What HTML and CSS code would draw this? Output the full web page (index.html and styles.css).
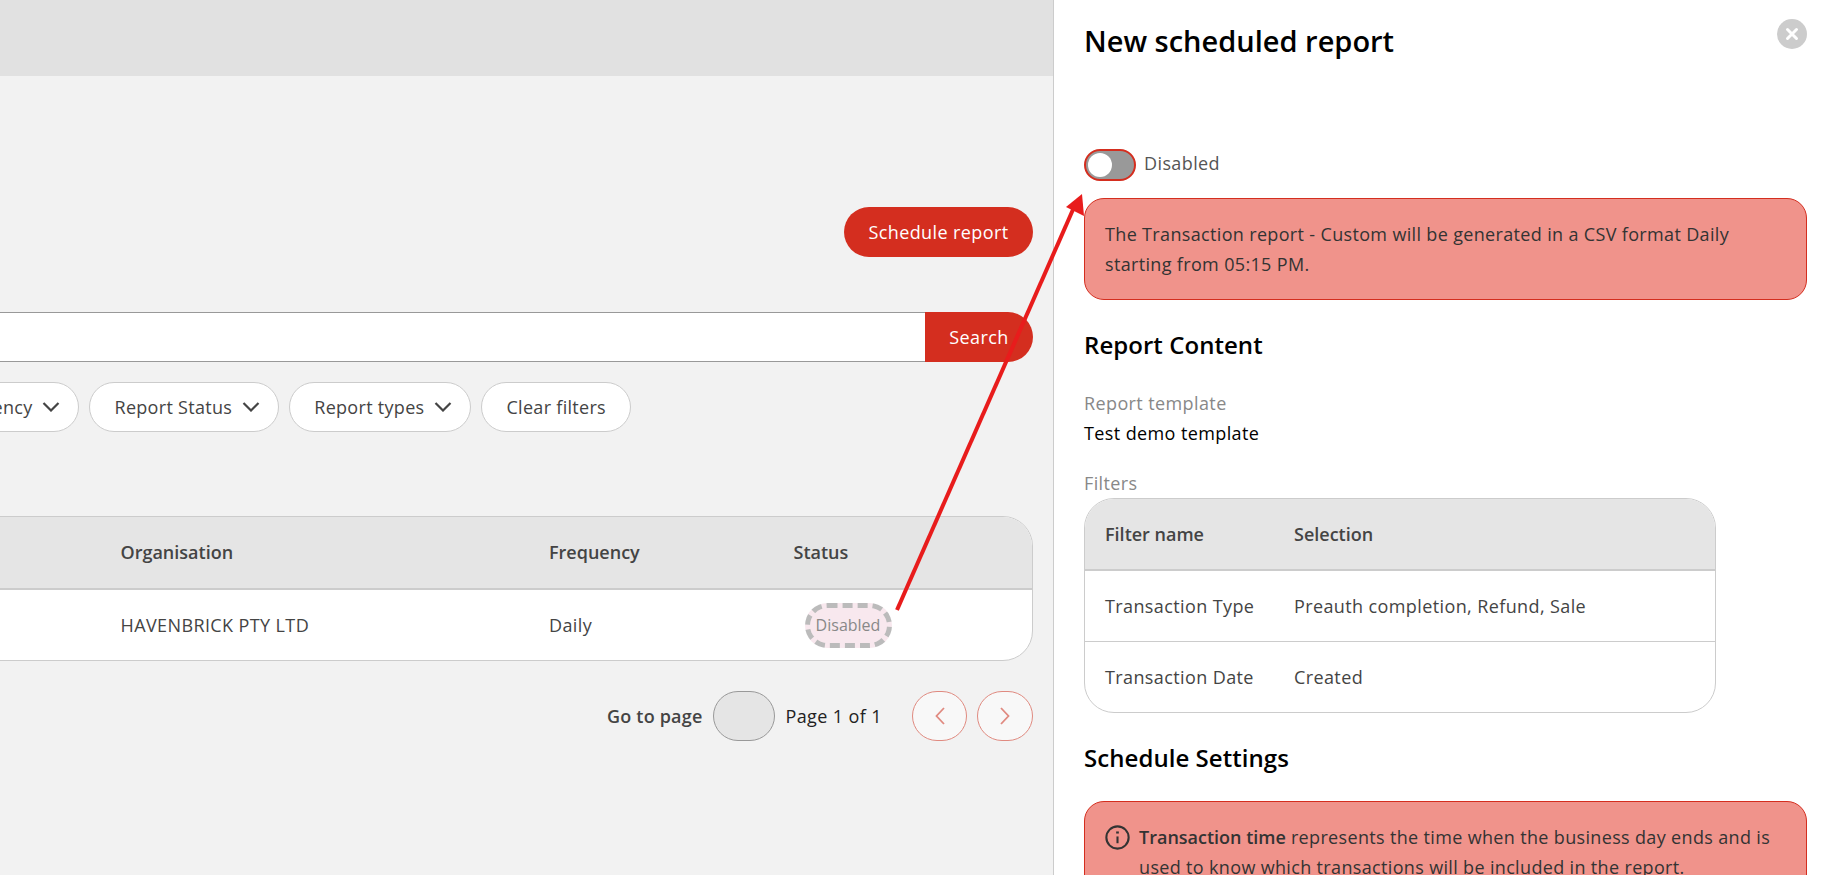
FILE: index.html
```html
<!DOCTYPE html>
<html lang="en">
<head>
<meta charset="utf-8">
<title>New scheduled report</title>
<link rel="stylesheet" href="styles.css">
</head>
<body>
<div class="app">
  <main class="main">
    <div class="topbar"></div>
    <div class="actions"><button class="btn-primary">Schedule report</button></div>
    <div class="search">
      <div class="search-input"></div>
      <button class="search-btn">Search</button>
    </div>
    <div class="pills">
      <button class="pill">Frequency<svg class="chev" viewBox="0 0 18 10"><path d="M1.5 1 9 8.5 16.5 1"/></svg></button>
      <button class="pill">Report Status<svg class="chev" viewBox="0 0 18 10"><path d="M1.5 1 9 8.5 16.5 1"/></svg></button>
      <button class="pill">Report types<svg class="chev" viewBox="0 0 18 10"><path d="M1.5 1 9 8.5 16.5 1"/></svg></button>
      <button class="pill pill-plain">Clear filters</button>
    </div>
    <div class="table">
      <div class="t-row t-head">
        <div></div><div>Organisation</div><div>Frequency</div><div>Status</div>
      </div>
      <div class="t-row t-body">
        <div></div><div>HAVENBRICK PTY LTD</div><div>Daily</div><div><span class="badge">Disabled</span></div>
      </div>
    </div>
    <div class="pager">
      <span class="goto">Go to page</span>
      <div class="page-input"></div>
      <span class="page-of">Page 1 of 1</span>
      <button class="page-btn"><svg viewBox="0 0 10 18"><path d="M9 1 1.5 9 9 17"/></svg></button>
      <button class="page-btn"><svg viewBox="0 0 10 18"><path d="M1 1 8.500 9 1 17"/></svg></button>
    </div>
  </main>
  <aside class="panel">
    <h1 class="title">New scheduled report</h1>
    <button class="close" aria-label="Close"><svg viewBox="0 0 14 14"><path d="M2.500 2.500 11.500 11.500M11.500 2.500 2.500 11.500"/></svg></button>
    <div class="toggle-row">
      <span class="toggle"><span class="knob"></span></span>
      <span class="toggle-label">Disabled</span>
    </div>
    <div class="alert alert-first">The Transaction report - Custom will be generated in a CSV format Daily starting from 05:15 PM.</div>
    <h2 class="section report-content">Report Content</h2>
    <div class="label">Report template</div>
    <div class="value">Test demo template</div>
    <div class="label label-filters">Filters</div>
    <div class="ftable">
      <div class="f-row f-head"><div>Filter name</div><div>Selection</div></div>
      <div class="f-row"><div>Transaction Type</div><div>Preauth completion, Refund, Sale</div></div>
      <div class="f-row"><div>Transaction Date</div><div>Created</div></div>
    </div>
    <h2 class="section schedule">Schedule Settings</h2>
    <div class="alert alert-info">
      <svg class="info" viewBox="0 0 24 24"><circle cx="12" cy="12" r="10.700"/><path d="M12 11v6.500"/><path class="dot" d="M12 6.200v2"/></svg>
      <div><b>Transaction time</b> represents the time when the business day ends and is used to know which transactions will be included in the report.</div>
    </div>
  </aside>
</div>
<svg class="arrow" viewBox="0 0 1835 875"><path class="arrow-line" d="M897 610 1075 205"/><path class="arrow-head" d="M1082 194 1066 207 1084 216Z"/></svg>
</body>
</html>
```
FILE: styles.css
```css
* { box-sizing: border-box; }
html, body { margin: 0; height: 875px; overflow: hidden; }
body { font-family: "Open Sans", "Liberation Sans", sans-serif; font-size: 18px; letter-spacing: 0.39px; color: #444; background: #f2f2f2; position: relative; }
button { font: inherit; letter-spacing: inherit; cursor: pointer; }
.app { display: flex; height: 875px; }

.main { width: 1053px; flex: none; overflow: hidden; background: #f2f2f2; }
.topbar { height: 76px; background: #e1e1e1; }
.actions { display: flex; justify-content: flex-end; padding-right: 20px; margin-top: 131px; }
.btn-primary { width: 189px; height: 50px; border: 0; border-radius: 25px; background: #d42e1f; color: #fff; }

.search { display: flex; margin: 55px 20px 0 0; height: 50px; }
.search-input { flex: 1; background: #fff; border: 1px solid #999; border-left: 0; border-right: 0; }
.search-btn { width: 108px; border: 0; border-radius: 0 25px 25px 0; background: #d42e1f; color: #fff; }

.pills { display: flex; justify-content: flex-end; gap: 10px; height: 50px; margin-top: 20px; padding-right: 422px; }
.pill { flex: none; display: flex; align-items: center; gap: 10px; height: 50px; padding: 0 18px 0 24px; border: 1px solid #ccc; border-radius: 25px; background: #fff; color: #444; letter-spacing: 0.3px; }
.pill-plain { padding: 0 24px; }
.chev { width: 18px; height: 10px; fill: none; stroke: #444; stroke-width: 2.200; }

.table { margin: 84px 20px 0 -40px; background: #fff; border: 1px solid #ccc; border-radius: 30px; overflow: hidden; }
.t-row { display: grid; grid-template-columns: 159.500px 428.500px 244.500px 1fr; align-items: center; }
.t-head { height: 73px; padding-bottom: 2px; background: #e5e5e5; border-bottom: 2px solid #ccc; font-weight: 600; letter-spacing: 0; }
.t-body { height: 70px; }
.badge { display: inline-flex; align-items: center; justify-content: center; margin-left: 11px; width: 87px; height: 45px; border: 5px dashed #bbb; border-radius: 23px; background: #f8e8ee; color: #888; font-size: 16px; letter-spacing: 0; }

.pager { display: flex; align-items: center; justify-content: flex-end; margin: 30px 20px 0 0; height: 50px; }
.goto { font-weight: 600; letter-spacing: 0.2px; }
.page-input { width: 62px; height: 50px; margin: 0 11px 0 10px; background: #e5e5e5; border: 1px solid #999; border-radius: 25px; }
.page-of { color: #222; margin-right: 30px; }
.page-btn { width: 55px; height: 50px; padding: 0; display: flex; align-items: center; justify-content: center; background: #f8f8f8; border: 1px solid #e08a80; border-radius: 25px; }
.page-btn + .page-btn { width: 56px; margin-left: 10px; }
.page-btn svg { width: 10px; height: 18px; fill: none; stroke: #e08a80; stroke-width: 1.800; }

.panel { flex: 1; position: relative; overflow: hidden; background: #fff; border-left: 1px solid #ccc; padding: 0 28px 0 30px; }
.title { margin: 0; padding-top: 21px; font-size: 29px; line-height: 40px; font-weight: 600; letter-spacing: 0; color: #000; }
.close { position: absolute; top: 19px; right: 28px; width: 30px; height: 30px; padding: 8px; border: 0; border-radius: 50%; background: #ccc; }
.close svg { display: block; fill: none; stroke: #fff; stroke-width: 3; stroke-linecap: round; }
.toggle-row { display: flex; align-items: center; gap: 8px; margin-top: 88px; height: 32px; }
.toggle { width: 52px; height: 32px; padding: 2px; border: 2px solid #d42e1f; border-radius: 16px; background: #999; }
.knob { display: block; width: 24px; height: 24px; border-radius: 50%; background: #fff; }
.toggle-label { color: #555; margin-top: -5px; }
.alert { background: #f0938b; border: 1px solid #d42e1f; border-radius: 20px; color: #333; line-height: 30px; letter-spacing: 0.34px; }
.alert-first { margin-top: 17px; height: 102px; padding: 20px 20px 0; }
.section { margin: 0; font-size: 24px; line-height: 34px; font-weight: 600; letter-spacing: 0.05px; color: #000; }
.report-content { margin-top: 28px; }
.label { color: #888; line-height: 30px; margin-top: 26px; }
.value { color: #000; line-height: 30px; }
.label-filters { margin-top: 20px; }
.ftable { width: 632px; height: 215px; border: 1px solid #ccc; border-radius: 30px; overflow: hidden; margin-top: 0; }
.f-row { display: grid; grid-template-columns: 189px 1fr; align-items: center; padding-left: 20px; height: 71px; border-top: 1px solid #ccc; }
.f-row:first-child { border-top: 0; }
.f-head { height: 72px; background: #e5e5e5; border-bottom: 2px solid #ccc; font-weight: 600; letter-spacing: 0; }
.f-head + .f-row { border-top: 0; height: 70px; }
.schedule { margin-top: 28px; }
.alert-info { display: flex; gap: 9px; margin-top: 26px; padding: 20px; }
.info { flex: none; width: 25px; height: 25px; margin-top: 3px; fill: none; stroke: #333; stroke-width: 2; }
.info .dot { stroke-width: 2.600; }
.alert-info b { font-weight: 600; letter-spacing: 0; }

.arrow { position: absolute; left: 0; top: 0; width: 1835px; height: 875px; pointer-events: none; }
.arrow-line { stroke: #e81c1c; stroke-width: 4; fill: none; }
.arrow-head { fill: #e81c1c; }
```
